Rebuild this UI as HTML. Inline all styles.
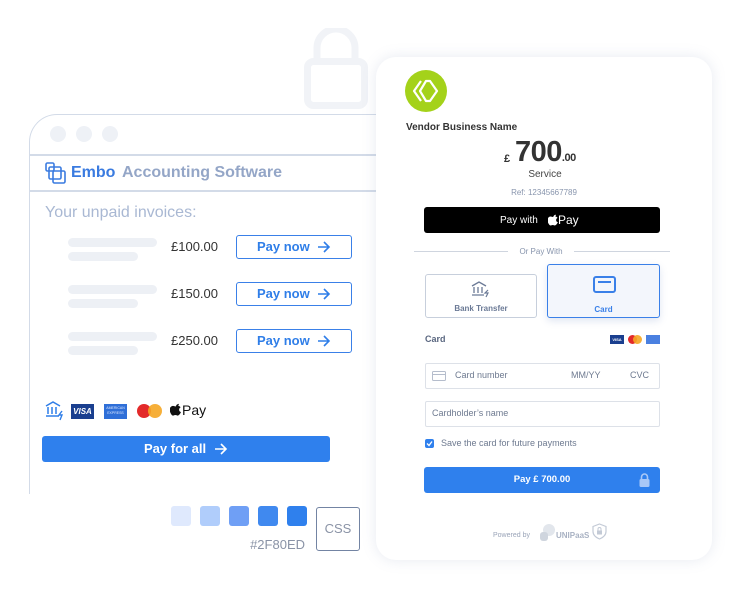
<!DOCTYPE html>
<html><head><meta charset="utf-8"><style>
*{margin:0;padding:0;box-sizing:border-box}
body{width:747px;height:600px;background:#fff;position:relative;overflow:hidden;font-family:"Liberation Sans",sans-serif}
.a{position:absolute}
.bar{position:absolute;background:#edf0f5;border-radius:5px;height:9px}
.amt{position:absolute;left:171px;font-size:13px;color:#333}
.pn{position:absolute;left:236px;width:116px;height:24px;border:1px solid #3a80e8;border-radius:3px;color:#2f7ee8;font-size:13px;font-weight:bold;line-height:22px;padding-left:20px}
.pn svg{position:absolute;right:20px;top:5px}
.sw{position:absolute;top:506px;width:20px;height:20px;border-radius:3px}
.inp{position:absolute;left:425px;width:235px;height:26px;border:1.5px solid #dde1e8;border-radius:2px;font-size:9px;color:#6e7a90;line-height:23px}
</style></head><body>
<svg class="a" style="left:300px;top:28px" width="72" height="82"><path d="M17 34V20a19 19 0 0 1 38 0v14" fill="none" stroke="#f1f3f7" stroke-width="7"/><rect x="7.5" y="33.5" width="57" height="44" rx="6" fill="none" stroke="#f1f3f7" stroke-width="7"/></svg>

<div class="a" style="left:29px;top:114px;width:400px;height:380px;border:1.5px solid #d3dbe8;border-right:none;border-bottom:none;border-top-left-radius:28px"></div>
<div class="a" style="left:30px;top:154px;width:360px;height:1.5px;background:#d3dbe8"></div>
<div class="a" style="left:30px;top:190px;width:360px;height:1.5px;background:#d3dbe8"></div>
<div class="a" style="left:50px;top:126px;width:16px;height:16px;border-radius:50%;background:#eef1f6"></div>
<div class="a" style="left:76px;top:126px;width:16px;height:16px;border-radius:50%;background:#eef1f6"></div>
<div class="a" style="left:102px;top:126px;width:16px;height:16px;border-radius:50%;background:#eef1f6"></div>
<svg class="a" style="left:45px;top:162px" width="22" height="22"><rect x="1" y="1" width="8" height="8" rx="1.5" fill="none" stroke="#3a7be0" stroke-width="1.6"/><rect x="4" y="5" width="12" height="12" rx="1.5" fill="none" stroke="#3a7be0" stroke-width="1.6"/><rect x="8" y="9" width="12" height="12" rx="1.5" fill="none" stroke="#3a7be0" stroke-width="1.6"/></svg>
<div class="a" style="left:71px;top:164px;font-size:16px;font-weight:bold;color:#3a7be0">Embo</div>
<div class="a" style="left:122px;top:164px;font-size:16px;font-weight:bold;color:#94a6c7">Accounting Software</div>
<div class="a" style="left:45px;top:204px;font-size:16px;color:#a9b8d3">Your unpaid invoices:</div>

<div class="bar" style="left:68px;top:238px;width:89px"></div><div class="bar" style="left:68px;top:252px;width:70px"></div>
<div class="amt" style="top:239px">£100.00</div>
<div class="pn" style="top:235px">Pay now<svg width="14" height="12"><path d="M1 6h11M7 1l5 5-5 5" fill="none" stroke="#2f7ee8" stroke-width="1.6"/></svg></div>
<div class="bar" style="left:68px;top:285px;width:89px"></div><div class="bar" style="left:68px;top:299px;width:70px"></div>
<div class="amt" style="top:286px">£150.00</div>
<div class="pn" style="top:282px">Pay now<svg width="14" height="12"><path d="M1 6h11M7 1l5 5-5 5" fill="none" stroke="#2f7ee8" stroke-width="1.6"/></svg></div>
<div class="bar" style="left:68px;top:332px;width:89px"></div><div class="bar" style="left:68px;top:346px;width:70px"></div>
<div class="amt" style="top:333px">£250.00</div>
<div class="pn" style="top:329px">Pay now<svg width="14" height="12"><path d="M1 6h11M7 1l5 5-5 5" fill="none" stroke="#2f7ee8" stroke-width="1.6"/></svg></div>

<svg class="a" style="left:44px;top:400px" width="22" height="22"><path d="M2 6L9 2l7 4M4 7v7M8 7v7M12 7v7M2 16h13" fill="none" stroke="#2f7ee8" stroke-width="1.5"/><path d="M18 11l-3 4h3l-2 5" fill="none" stroke="#2f7ee8" stroke-width="1.4"/></svg>
<div class="a" style="left:71px;top:404px;width:23px;height:15px;background:#1a3f8f;color:#fff;font-size:8px;font-weight:bold;font-style:italic;text-align:center;line-height:15px">VISA</div>
<div class="a" style="left:104px;top:404px;width:23px;height:15px;background:#2f6fd8;color:#dfe9ff;font-size:3.5px;text-align:center;line-height:5px;padding-top:2px">AMERICAN<br>EXPRESS</div>
<div class="a" style="left:137px;top:404px;width:14px;height:14px;border-radius:50%;background:#e32a2a"></div>
<div class="a" style="left:148px;top:404px;width:14px;height:14px;border-radius:50%;background:#f5a623;opacity:.9"></div>
<svg class="a" style="left:170px;top:403px" width="12" height="14"><path d="M8.3 1c.1 1-.3 2-1 2.6-.6.6-1.5.9-2.2.8-.1-.9.3-1.9 1-2.5.6-.6 1.5-.9 2.2-.9zM10.8 10.2c-.4.9-.6 1.3-1.1 2-.7 1-1.6 2.1-2.7 2.1-1 0-1.2-.6-2.600-.6s-1.6.6-2.6.6C.8 14.3 0 13.3-.6 12.3c-1.7-2.6-1.9-5.6-.8-7.2.7-1.2 1.9-1.900 3.1-1.9s1.9.6 2.9.6 1.6-.6 2.9-.6c1.1 0 2.2.6 2.9 1.6-2.6 1.4-2.2 5.1.4 5.4z" transform="translate(1.5 0) scale(.88)" fill="#111"/></svg>
<div class="a" style="left:182px;top:402px;font-size:14px;color:#111">Pay</div>
<div class="a" style="left:42px;top:436px;width:288px;height:26px;background:#2f80ed;border-radius:3px;color:#fff;font-size:13px;font-weight:bold;line-height:26px;padding-left:102px">Pay for all<svg style="position:absolute;left:172px;top:7px" width="14" height="12"><path d="M1 6h11M7 1l5 5-5 5" fill="none" stroke="#fff" stroke-width="1.6"/></svg></div>

<div class="sw" style="left:171px;background:#dfe9fd"></div>
<div class="sw" style="left:200px;background:#b0cdfb"></div>
<div class="sw" style="left:229px;background:#6f9ff5"></div>
<div class="sw" style="left:258px;background:#4089ef"></div>
<div class="sw" style="left:287px;background:#2f80ed"></div>
<div class="a" style="left:200px;top:537px;width:105px;text-align:right;font-size:13px;color:#8a93a6">#2F80ED</div>
<div class="a" style="left:316px;top:507px;width:44px;height:44px;border:1px solid #7384a3;border-radius:3px;font-size:13px;color:#8a93a6;text-align:center;line-height:42px">CSS</div>

<div class="a" style="left:376px;top:57px;width:336px;height:503px;background:#fff;border-radius:20px;box-shadow:0 0 14px rgba(120,140,180,.18)"></div>
<svg class="a" style="left:405px;top:70px" width="42" height="42"><circle cx="21" cy="21" r="21" fill="#a4d21a"/><path d="M16 11l-7 10 7 10M21 11l-6 10 6 10h4l7-10-7-10z" fill="none" stroke="#fff" stroke-width="2.2" stroke-linejoin="round"/></svg>
<div class="a" style="left:406px;top:122px;font-size:10px;font-weight:bold;color:#333">Vendor Business Name</div>
<div class="a" style="left:504px;top:153px;font-size:11px;font-weight:bold;color:#333">£</div>
<div class="a" style="left:515px;top:136px;font-size:29px;font-weight:bold;color:#333;letter-spacing:-.5px">700<span style="font-size:11px">.00</span></div>
<div class="a" style="left:376px;top:169px;width:336px;text-align:center;font-size:10px;color:#444;padding-left:2px">Service</div>
<div class="a" style="left:376px;top:188px;width:336px;text-align:center;font-size:8px;color:#8895ad">Ref: 12345667789</div>
<div class="a" style="left:424px;top:207px;width:236px;height:26px;background:#000;border-radius:3px;color:#fff;font-size:10px"><span class="a" style="left:76px;top:8px;line-height:12px">Pay with</span><svg class="a" style="left:124px;top:7px" width="11" height="13"><path d="M8.3 1c.1 1-.3 2-1 2.6-.6.6-1.5.9-2.2.8-.1-.9.3-1.9 1-2.5.6-.6 1.5-.9 2.2-.9zM10.8 10.2c-.4.9-.6 1.3-1.1 2-.7 1-1.6 2.1-2.7 2.1-1 0-1.2-.6-2.6-.6s-1.6.6-2.6.6C.8 14.3 0 13.3-.6 12.3c-1.7-2.6-1.9-5.6-.8-7.2.7-1.2 1.9-1.9 3.1-1.9s1.9.6 2.9.6 1.6-.6 2.9-.6c1.1 0 2.2.6 2.9 1.6-2.6 1.4-2.2 5.1.4 5.4z" transform="translate(1.2 0) scale(.8)" fill="#fff"/></svg><span class="a" style="left:134px;top:6px;line-height:14px;font-size:12px">Pay</span></div>
<div class="a" style="left:414px;top:251px;width:94px;height:1px;background:#cfd5df"></div>
<div class="a" style="left:574px;top:251px;width:96px;height:1px;background:#cfd5df"></div>
<div class="a" style="left:508px;top:247px;width:66px;text-align:center;font-size:8px;color:#8895ad">Or Pay With</div>
<div class="a" style="left:425px;top:274px;width:112px;height:44px;border:1.5px solid #c7cfdc;border-radius:3px"></div>
<svg class="a" style="left:471px;top:281px" width="20" height="18"><path d="M1 5l7-4 7 4M3 6v6M7 6v6M11 6v6M1 14h12" fill="none" stroke="#6b7a96" stroke-width="1.3"/><path d="M17 9l-3 3h3l-2 4" fill="none" stroke="#6b7a96" stroke-width="1.2"/></svg>
<div class="a" style="left:425px;top:304px;width:112px;text-align:center;font-size:8px;font-weight:bold;color:#6b7a96">Bank Transfer</div>
<div class="a" style="left:547px;top:264px;width:113px;height:54px;border:1.5px solid #3a80e8;border-radius:3px;background:#f3f6fc;box-shadow:0 3px 8px rgba(100,130,190,.2)"></div>
<div class="a" style="left:593px;top:276px;width:23px;height:17px;border:2px solid #3a80e8;border-radius:3px"><div style="margin:3px 3px 0;height:2px;background:#3a80e8"></div></div>
<div class="a" style="left:547px;top:305px;width:113px;text-align:center;font-size:8px;font-weight:bold;color:#3a80e8">Card</div>
<div class="a" style="left:425px;top:334px;font-size:9px;font-weight:bold;color:#5a6780">Card</div>
<div class="a" style="left:610px;top:335px;width:14px;height:9px;background:#1a3f8f;color:#fff;font-size:4px;font-weight:bold;text-align:center;line-height:9px">VISA</div>
<div class="a" style="left:628px;top:335px;width:9px;height:9px;border-radius:50%;background:#e32a2a"></div>
<div class="a" style="left:633px;top:335px;width:9px;height:9px;border-radius:50%;background:#f5a623;opacity:.9"></div>
<div class="a" style="left:646px;top:335px;width:14px;height:9px;background:#4a80e0"></div>
<div class="inp" style="top:363px"><div class="a" style="left:6px;top:7px;width:14px;height:10px;border:1px solid #b5bdcc;border-radius:1.5px"><div style="margin-top:2px;height:1px;background:#b5bdcc"></div></div><span class="a" style="left:29px">Card number</span><span class="a" style="left:145px">MM/YY</span><span class="a" style="left:204px">CVC</span></div>
<div class="inp" style="top:401px;padding-left:6px">Cardholder’s name</div>
<div class="a" style="left:425px;top:439px;width:9px;height:9px;background:#2f80ed;border-radius:2px"><svg style="position:absolute;left:1px;top:1px" width="7" height="7"><path d="M1 3.5l2 2 3-4" fill="none" stroke="#fff" stroke-width="1.3"/></svg></div>
<div class="a" style="left:441px;top:438px;font-size:9px;color:#6e7a90">Save the card for future payments</div>
<div class="a" style="left:424px;top:467px;width:236px;height:26px;background:#2f80ed;border-radius:3px;color:#fff;font-size:9.5px;font-weight:bold;text-align:center;line-height:26px">Pay £ 700.00</div>
<svg class="a" style="left:638px;top:472px" width="13" height="16"><path d="M3.5 7V5a3 3 0 0 1 6 0v2" fill="none" stroke="#a9c8f7" stroke-width="1.6"/><rect x="1.5" y="7" width="10" height="8" rx="1.5" fill="#a9c8f7"/></svg>
<div class="a" style="left:493px;top:532px;font-size:7px;color:#9aa4b8">Powered by</div>
<svg class="a" style="left:539px;top:524px" width="17" height="18"><circle cx="10" cy="6" r="6" fill="#e2e6ec"/><rect x="1" y="8" width="8" height="9" rx="3" fill="#cfd5de"/></svg>
<div class="a" style="left:556px;top:531px;font-size:8px;font-weight:bold;color:#a9b2c3">UNIPaaS</div>
<svg class="a" style="left:592px;top:523px" width="15" height="17"><path d="M7.5 1L14 3.5v5c0 3.5-3 6-6.5 7.5C4 14.5 1 12 1 8.5v-5z" fill="none" stroke="#c3cad6" stroke-width="1.2"/><rect x="5" y="7.5" width="5" height="4" fill="#c3cad6"/><path d="M6 7.5V6a1.5 1.5 0 0 1 3 0v1.5" fill="none" stroke="#c3cad6"/></svg>
</body></html>
